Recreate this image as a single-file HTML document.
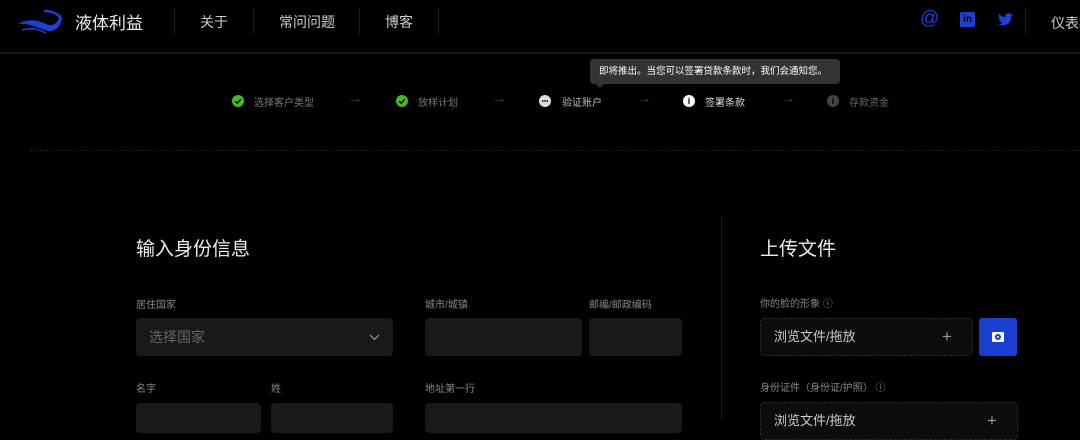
<!DOCTYPE html><html><head><meta charset="utf-8"><style>
*{margin:0;padding:0;box-sizing:border-box}
body{width:1080px;height:420px;background:#000;overflow:hidden;position:relative;font-family:"Liberation Sans","Noto Sans CJK SC",sans-serif;color:#ddd}
.a{position:absolute;white-space:nowrap}
.vd{position:absolute;top:8px;width:1px;height:26px;background:#1e1e1e}
.nav{position:absolute;top:12px;font-size:14px;color:#ccc;white-space:nowrap}
.st{position:absolute;top:94px;font-size:10px;color:#777;white-space:nowrap}
.ic{position:absolute;top:95px;width:12px;height:12px;border-radius:50%}
.ar{position:absolute;top:90px;font-size:16px;color:#3a3a3a}
.lb{position:absolute;font-size:10px;color:#888;white-space:nowrap}
.in{position:absolute;background:#191919;border-radius:4px}
</style></head><body>
<svg class="a" style="left:16px;top:6px" width="48" height="30" viewBox="0 0 48 30"><path d="M2 18 C12 12 22 14 30 18 C36 21 42 18 45 8 C47 17 42 25 34 25 C26 25 18 17 2 18Z" fill="#1d3fd6"/><path d="M6 24 C16 21 22 23 30 27" stroke="#1d3fd6" stroke-width="1.5" fill="none"/><path d="M28 5 C38 5 44 9 45 14" stroke="#1d3fd6" stroke-width="2.5" fill="none"/></svg>
<div class="a" style="left:75px;top:9px;font-size:17px;color:#eee">液体利益</div>
<div class="vd" style="left:174px"></div><div class="vd" style="left:253px"></div><div class="vd" style="left:359px"></div><div class="vd" style="left:438px"></div><div class="vd" style="left:1025px"></div>
<div class="nav" style="left:200px">关于</div><div class="nav" style="left:279px">常问问题</div><div class="nav" style="left:385px">博客</div>
<div class="a" style="left:920px;top:8px;font-size:19px;color:#1d3fd6">@</div>
<div class="a" style="left:960px;top:12px;width:15px;height:15px;background:#1d3fd6;border-radius:2px;color:#000;font-size:10px;font-weight:bold;line-height:15px;text-align:center">in</div>
<svg class="a" style="left:998px;top:13px" width="15" height="13" viewBox="0 0 24 20"><path d="M24 2.4a10 10 0 0 1-2.8.8A5 5 0 0 0 23.3.4a10 10 0 0 1-3.1 1.2A4.9 4.9 0 0 0 11.8 6 14 14 0 0 1 1.7.9a4.9 4.9 0 0 0 1.5 6.6A4.9 4.9 0 0 1 1 6.9a4.9 4.9 0 0 0 3.9 4.8 5 5 0 0 1-2.2.1 4.9 4.9 0 0 0 4.6 3.4A9.9 9.9 0 0 1 0 17.3 14 14 0 0 0 7.5 19.5c9.1 0 14-7.5 14-14v-.6A10 10 0 0 0 24 2.4z" fill="#1d3fd6"/></svg>
<div class="nav" style="left:1051px;top:13px">仪表板</div>
<div class="a" style="left:0;top:52px;width:1080px;height:2px;background:#151515"></div>
<div class="a" style="left:590px;top:59px;width:250px;height:25px;background:#333;border-radius:4px;color:#fff;font-size:9.5px;line-height:25px;padding-left:9px">即将推出。当您可以签署贷款条款时，我们会通知您。</div>
<div class="a" style="left:596px;top:84px;width:0;height:0;border-left:4px solid transparent;border-right:4px solid transparent;border-top:4px solid #333"></div>
<svg class="a" style="left:232px;top:95px" width="12" height="12"><circle cx="6" cy="6" r="6" fill="#4cb52a"/><path d="M3.2 6.2l2 2 3.6-4" stroke="#000" stroke-width="1.4" fill="none"/></svg><div class="st" style="left:254px">选择客户类型</div><div class="ar" style="left:347px">→</div>
<svg class="a" style="left:396px;top:95px" width="12" height="12"><circle cx="6" cy="6" r="6" fill="#4cb52a"/><path d="M3.2 6.2l2 2 3.6-4" stroke="#000" stroke-width="1.4" fill="none"/></svg><div class="st" style="left:418px">放样计划</div><div class="ar" style="left:491px">→</div>
<svg class="a" style="left:539px;top:95px" width="12" height="12"><circle cx="6" cy="6" r="6" fill="#ddd"/><path d="M3 6h6" stroke="#000" stroke-width="1.5" stroke-dasharray="1.5 0.75"/></svg><div class="st" style="left:562px;color:#bbb">验证账户</div><div class="ar" style="left:636px">→</div>
<div class="ic" style="left:683px;background:#fff;color:#000;font-size:9px;text-align:center;line-height:12px;font-weight:bold">i</div><div class="st" style="left:705px;color:#ddd">签署条款</div><div class="ar" style="left:780px">→</div>
<div class="ic" style="left:827px;background:#444;color:#000;font-size:9px;text-align:center;line-height:12px;font-weight:bold">i</div><div class="st" style="left:849px;color:#666">存款资金</div>
<div class="a" style="left:30px;top:150px;width:1050px;border-top:1px dashed #1c1c1c"></div>
<div class="a" style="left:721px;top:216px;width:1px;height:204px;background:#1a1a1a"></div>
<div class="a" style="left:136px;top:234px;font-size:19px;color:#eee">输入身份信息</div>
<div class="lb" style="left:136px;top:296px">居住国家</div><div class="lb" style="left:425px;top:296px">城市/城镇</div><div class="lb" style="left:589px;top:296px">邮编/邮政编码</div>
<div class="in" style="left:136px;top:318px;width:257px;height:38px;color:#666;font-size:14px;line-height:38px;padding-left:13px">选择国家<svg class="a" style="left:233px;top:16px" width="11" height="7" viewBox="0 0 11 7"><path d="M1 1l4.5 4.5L10 1" stroke="#aaa" fill="none"/></svg></div>
<div class="in" style="left:425px;top:318px;width:157px;height:38px"></div>
<div class="in" style="left:589px;top:318px;width:93px;height:38px"></div>
<div class="lb" style="left:136px;top:380px">名字</div><div class="lb" style="left:271px;top:380px">姓</div><div class="lb" style="left:425px;top:380px">地址第一行</div>
<div class="in" style="left:136px;top:403px;width:125px;height:30px"></div>
<div class="in" style="left:271px;top:403px;width:122px;height:30px"></div>
<div class="in" style="left:425px;top:403px;width:257px;height:30px"></div>
<div class="a" style="left:760px;top:234px;font-size:19px;color:#eee">上传文件</div>
<div class="lb" style="left:760px;top:295px">你的脸的形象 ⓘ</div>
<div class="a" style="left:760px;top:318px;width:213px;height:38px;background:#0c0c0c;border:1px dashed #2a2a2a;border-radius:4px;font-size:13px;color:#ccc;line-height:36px;padding-left:13px">浏览文件/拖放<span class="a" style="left:181px;top:0;font-size:17px;color:#999">+</span></div>
<div class="a" style="left:979px;top:318px;width:38px;height:38px;background:#1a3fd0;border-radius:3px"><div class="a" style="left:13px;top:14px;width:12px;height:10px;background:#fff;border-radius:1px"><div class="a" style="left:3px;top:2px;width:6px;height:6px;border-radius:50%;border:2px solid #1a3fd0"></div></div></div>
<div class="lb" style="left:760px;top:379px">身份证件（身份证/护照） ⓘ</div>
<div class="a" style="left:760px;top:402px;width:258px;height:38px;background:#0c0c0c;border:1px dashed #2a2a2a;border-radius:4px;font-size:13px;color:#ccc;line-height:36px;padding-left:13px">浏览文件/拖放<span class="a" style="left:226px;top:0;font-size:17px;color:#999">+</span></div>
</body></html>
